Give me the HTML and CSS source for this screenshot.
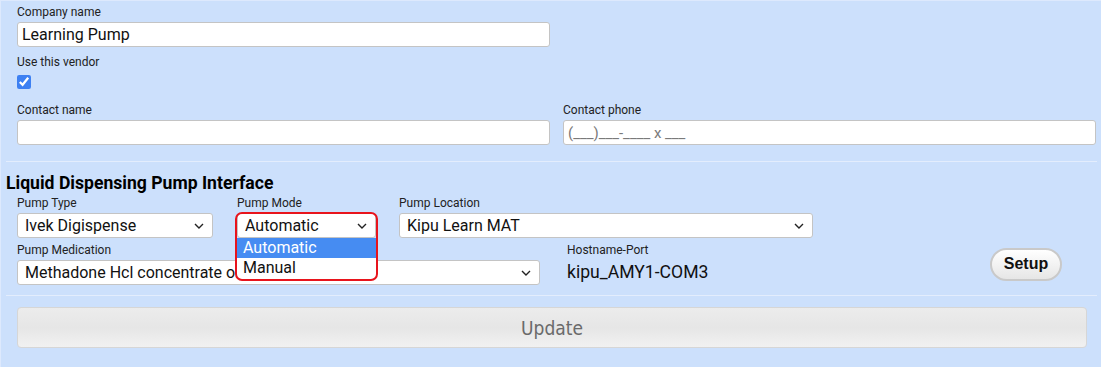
FILE: index.html
```html
<!DOCTYPE html>
<html lang="en">
<head>
    <meta charset="UTF-8">
    <meta name="viewport" content="width=device-width, initial-scale=1.0">
    <title>Vendor</title>
    <link rel="stylesheet" href="styles.css">
</head>
<body>
    <div class="panel">
        <div class="section">
            <div class="field half">
                <label>Company name</label>
                <input type="text" class="text-input first" value="Learning Pump">
            </div>
            <div class="field">
                <label>Use this vendor</label>
                <input type="checkbox" class="check" checked>
            </div>
            <div class="pair">
                <div class="field">
                    <label>Contact name</label>
                    <input type="text" class="text-input">
                </div>
                <div class="field">
                    <label>Contact phone</label>
                    <input type="text" class="text-input phone" value="(___)___-____ x ___">
                </div>
            </div>
        </div>

        <hr class="rule">

        <h3 class="title">Liquid Dispensing Pump Interface</h3>

        <div class="section">
            <div class="pump-row">
                <div class="field pump-type">
                    <label>Pump Type</label>
                    <div class="select-wrap">
                        <select class="select"><option>Ivek Digispense</option></select>
                        <svg class="chevron" width="10" height="6" viewBox="0 0 10 6"><path d="M1 1l4 4 4-4" fill="none" stroke="#222" stroke-width="1.4"/></svg>
                    </div>
                </div>
                <div class="field pump-mode">
                    <label>Pump Mode</label>
                    <div class="select-wrap">
                        <select class="select"><option>Automatic</option><option>Manual</option></select>
                        <svg class="chevron" width="10" height="6" viewBox="0 0 10 6"><path d="M1 1l4 4 4-4" fill="none" stroke="#222" stroke-width="1.4"/></svg>
                        <ul class="dropdown">
                            <li class="picked">Automatic</li>
                            <li>Manual</li>
                        </ul>
                        <div class="callout"></div>
                    </div>
                </div>
                <div class="field pump-location">
                    <label>Pump Location</label>
                    <div class="select-wrap">
                        <select class="select"><option>Kipu Learn MAT</option></select>
                        <svg class="chevron" width="10" height="6" viewBox="0 0 10 6"><path d="M1 1l4 4 4-4" fill="none" stroke="#222" stroke-width="1.4"/></svg>
                    </div>
                </div>
            </div>

            <div class="pump-row second">
                <div class="field pump-med">
                    <label>Pump Medication</label>
                    <div class="select-wrap">
                        <select class="select"><option>Methadone Hcl concentrate oral 10 mg/mL Roxy</option></select>
                        <svg class="chevron" width="10" height="6" viewBox="0 0 10 6"><path d="M1 1l4 4 4-4" fill="none" stroke="#222" stroke-width="1.4"/></svg>
                    </div>
                </div>
                <div class="field host">
                    <label>Hostname-Port</label>
                    <div class="host-value">kipu_AMY1-COM3</div>
                </div>
                <button class="setup">Setup</button>
            </div>
        </div>

        <hr class="rule">

        <div class="section">
            <button class="update">Update</button>
        </div>
    </div>
</body>
</html>
```

FILE: styles.css
```css
body {
    margin: 0;
    padding: 0;
    background-color: #cce0fc;
    font-family: Roboto, "Liberation Sans", sans-serif;
    color: #111;
}

.panel {
    height: 367px;
    box-sizing: border-box;
    border-top: 1px solid #dde9fd;
    border-left: 1px solid #dde9fd;
    padding: 4px 4px 0 5px;
}

.section {
    padding-left: 11px;
}

.field label {
    display: block;
    font-size: 12px;
    line-height: 14px;
    color: #222;
    margin-bottom: 3px;
}

.half {
    width: 533px;
}

.text-input {
    display: block;
    width: 100%;
    height: 25px;
    box-sizing: border-box;
    margin: 0 0 6px 0;
    padding: 0 4px;
    border: 1px solid #c4c4c4;
    border-radius: 3px;
    background: #fff;
    font-family: Roboto, "Liberation Sans", sans-serif;
    font-size: 16px;
    color: #111;
}

.text-input.first {
    margin-bottom: 8px;
}

.text-input.phone {
    font-size: 15px;
    color: #7a7a7a;
}

.check {
    display: block;
    width: 14px;
    height: 14px;
    margin: 6px 0 14px 0;
    accent-color: #3d80f2;
}

.pair {
    display: grid;
    grid-template-columns: 533px 533px;
    gap: 13px;
}

.rule {
    border: none;
    border-top: 1px solid #e3edfd;
    margin: 10px 0 0 0;
}

.title {
    font-size: 17.6px;
    line-height: 19px;
    font-weight: bold;
    margin: 12px 0 3px 0;
    color: #000;
}

.pump-row {
    display: flex;
    gap: 23px;
}

.pump-row.second {
    margin-top: 5px;
    gap: 0;
}

.pump-type { width: 196px; }
.pump-mode { width: 139px; margin-left: 1px; }
.pump-location { width: 414px; }
.pump-med { width: 523px; }

.host {
    margin-left: 27px;
    width: 423px;
}

.select-wrap {
    position: relative;
}

.select {
    display: block;
    width: 100%;
    height: 25px;
    appearance: none;
    -webkit-appearance: none;
    border: 1px solid #c4c4c4;
    border-radius: 3px;
    background: #fff;
    padding: 0 24px 0 7px;
    font-family: Roboto, "Liberation Sans", sans-serif;
    font-size: 16px;
    color: #111;
}

.chevron {
    position: absolute;
    right: 9px;
    top: 10px;
    pointer-events: none;
}

.dropdown {
    position: absolute;
    top: 25px;
    left: 0;
    right: 0;
    margin: 0;
    padding: 0 0 3px 0;
    list-style: none;
    background: #fff;
    z-index: 5;
}

.dropdown li {
    height: 20px;
    line-height: 20px;
    padding-left: 6px;
    font-size: 16px;
    color: #111;
}

.dropdown li.picked {
    background: #468cf2;
    color: #fff;
}

.callout {
    position: absolute;
    top: -1px;
    left: -2px;
    right: -2px;
    height: 69px;
    box-sizing: border-box;
    border: 2px solid #e8141c;
    border-radius: 7px;
    z-index: 6;
    pointer-events: none;
}

.host-value {
    font-size: 17.6px;
    line-height: 25px;
    color: #111;
}

.setup {
    align-self: center;
    width: 72px;
    height: 33px;
    border: 2px solid #c9c9c9;
    border-radius: 17px;
    background: linear-gradient(#ffffff, #e6e6e6);
    font-family: "Liberation Sans", Arial, sans-serif;
    font-weight: bold;
    font-size: 16px;
    color: #111;
}

.update {
    display: block;
    width: 1070px;
    height: 41px;
    margin-top: 11px;
    border: 1px solid #d6d6d6;
    border-radius: 4px;
    background: linear-gradient(#ececec 0%, #e6e6e6 50%, #f1f1f1 100%);
    font-family: "DejaVu Sans Condensed", "DejaVu Sans", sans-serif;
    font-size: 19px;
    color: #6a6a6a;
}
```
